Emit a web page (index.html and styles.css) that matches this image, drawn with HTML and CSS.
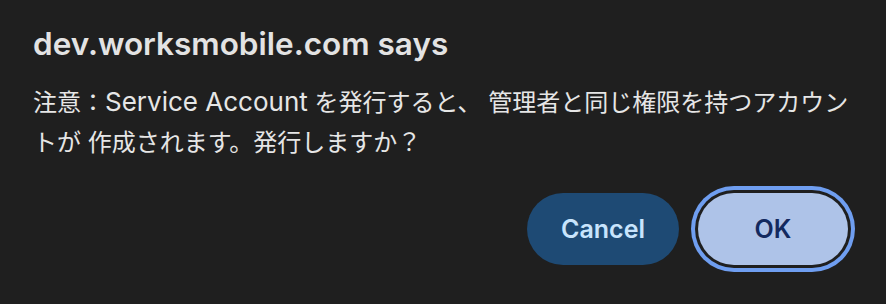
FILE: index.html
```html
<!DOCTYPE html>
<html lang="ja">

<head>
    <meta charset="UTF-8">
    <meta name="viewport" content="width=device-width, initial-scale=1.0">
    <title>dev.worksmobile.com says</title>
    <link rel="stylesheet" href="styles.css">
</head>

<body>
    <div class="dialog">
        <div class="dialog-title">dev.worksmobile.com says</div>
        <div class="dialog-message">
            注意：<span class="latin">Service Account</span> を発行すると、 管理者と同じ権限を持つアカウントが 作成されます。発行しますか？
        </div>
        <div class="dialog-buttons">
            <button class="btn btn-cancel">Cancel</button>
            <button class="btn btn-ok">OK</button>
        </div>
    </div>
</body>

</html>
```

FILE: styles.css
```css
* {
    margin: 0;
    padding: 0;
    box-sizing: border-box;
}

html,
body {
    background-color: #1f1f1f;
    height: 100%;
}

body {
    font-family: "Inter", "Noto Sans CJK JP", sans-serif;
    color: #e3e3e3;
}

.dialog {
    padding: 26px 31px 0 33px;
}

.dialog-title {
    font-size: 31.5px;
    font-weight: 600;
    line-height: 36px;
    color: #e3e3e3;
}

.dialog-message {
    max-width: 828px;
    margin-top: 21px;
    font-size: 24px;
    line-height: 40px;
    color: #e6e6e6;
}

/* latin words render a bit wider in the original */
.latin {
    font-size: 26px;
    line-height: 1;
}

.dialog-buttons {
    display: flex;
    justify-content: flex-end;
    gap: 19px;
    margin-top: 30px;
    margin-right: 7px;
}

.btn {
    height: 72px;
    border: none;
    border-radius: 36px;
    font-family: "Inter", sans-serif;
    font-size: 25px;
    font-weight: 600;
}

.btn-cancel {
    width: 152px;
    background-color: #1e4a74;
    color: #c8e4fc;
}

.btn-ok {
    width: 150px;
    background-color: #aec3e8;
    color: #13295f;
    box-shadow: 0 0 0 3px #1f1f1f, 0 0 0 7px #6f9ef0;
}
```
